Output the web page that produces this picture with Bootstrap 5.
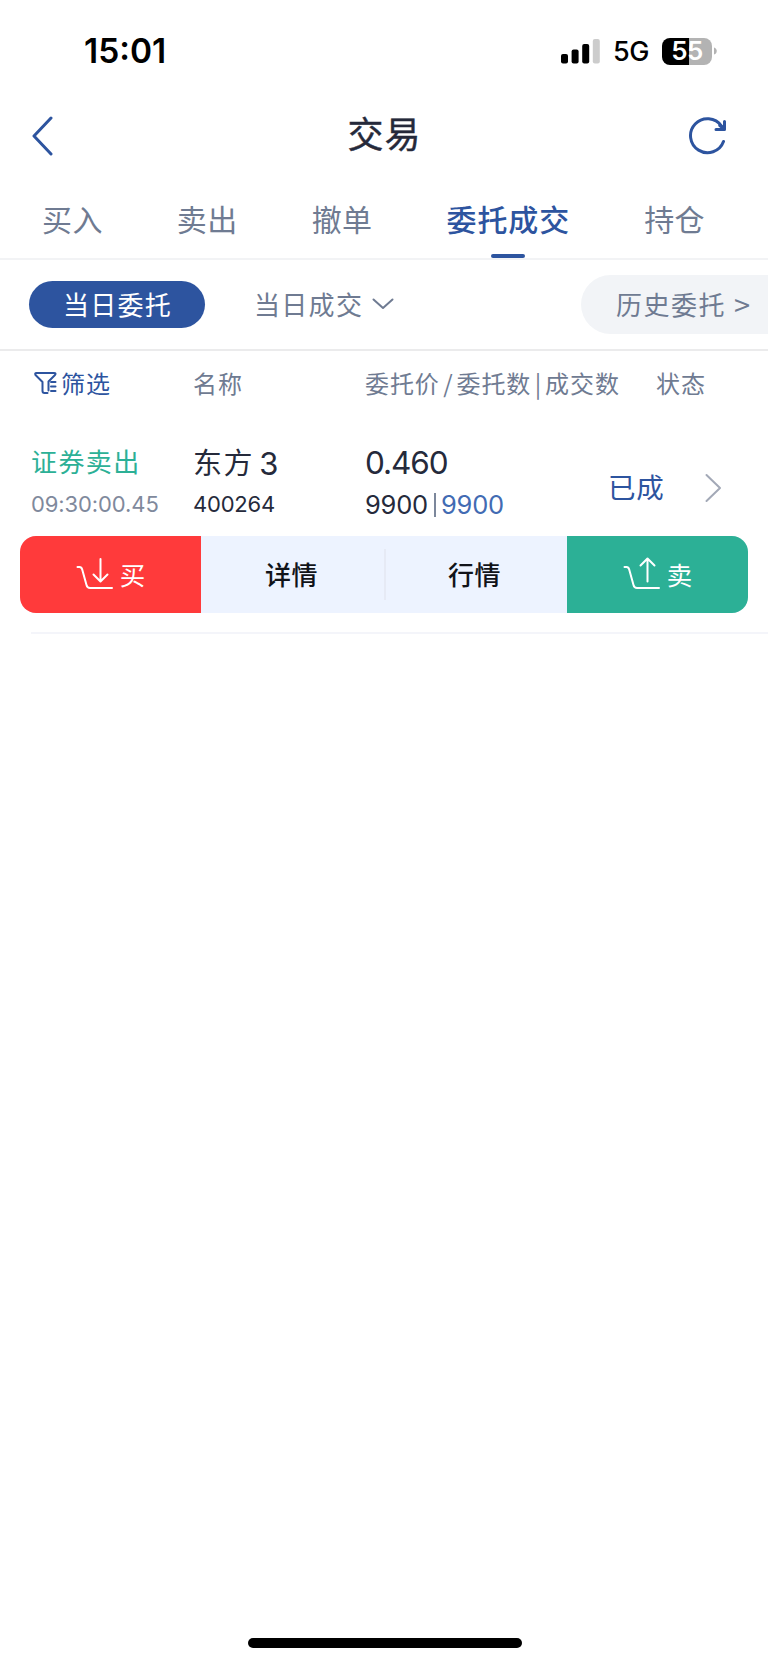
<!DOCTYPE html>
<html lang="zh-CN">
<head>
<meta charset="utf-8">
<meta name="viewport" content="width=device-width, initial-scale=1">
<title>交易</title>
<link href="https://cdn.jsdelivr.net/npm/bootstrap@5.3.0/dist/css/bootstrap.min.css" rel="stylesheet">
<style>
  :root { --brand: #2d549f; --muted: #6f7b92; --ink: #252a3b; --sell: #2cb096; --buy: #ff3a3b; }
  body { font-family: Inter, "Noto Sans CJK SC", sans-serif; color: var(--ink); background: #fff; line-height: 1; min-height: 1665px; overflow-x: hidden; }
  svg { display: block; flex: none; fill: none; stroke-linecap: round; stroke-linejoin: round; }
  .zh { font-family: "Noto Sans CJK SC", sans-serif; }
  .brand { color: var(--brand); }
  .soft { color: var(--muted); }
  .status-bar { height: 90px; padding: 12px 51px 0 84px; }
  .clock { font-size: 33.5px; font-weight: 600; letter-spacing: 0; padding-top: 2px; }
  .net { font-size: 27px; font-weight: 500; margin: 0 13px 0 13px; padding-top: 1px; letter-spacing: -.4px; }
  .battery { width: 50px; height: 27px; border-radius: 8px; background: linear-gradient(90deg, #000 55%, #b3b3b3 55%); color: #fff; font-size: 26px; font-weight: 600; letter-spacing: -.6px; }
  .title-bar { height: 91px; padding: 0 40px 0 31px; }
  .title-bar h1 { font-size: 36px; font-weight: 400; letter-spacing: 1px; color: #25293a; padding: 0 0 5px 28px; -webkit-text-stroke: .4px; }
  .tabs { height: 79px; border-bottom: 2px solid #f2f3f5; padding: 0 63px 0 42px; font-size: 30px; letter-spacing: .4px; }
  .tabs a { color: var(--muted); text-decoration: none; height: 77px; padding-bottom: 4px; }
  .tabs a.active { color: var(--brand); font-weight: 500; letter-spacing: .9px; }
  .tabs a.active::after { content: ""; position: absolute; left: 50%; bottom: 0; width: 34px; height: 4px; margin-left: -17px; border-radius: 2px; background: var(--brand); }
  .filters { height: 91px; border-bottom: 2px solid #ebebec; font-size: 26px; letter-spacing: 1.3px; padding-left: 29px; }
  .today { width: 176px; height: 47px; background: var(--brand); color: #fff; padding: 0 0 2px 1px; }
  .deals { margin-left: 49px; gap: 9px; padding-bottom: 2px; }
  .history { width: 187px; height: 59px; border-radius: 30px 0 0 30px; background: #f2f4f7; padding: 0 0 2px 35px; letter-spacing: 1.5px; }
  .more { font-size: 29px; margin-left: 8px; }
  .grid-row { display: grid; grid-template-columns: 162px 172px 1fr; padding-left: 31px; }
  .head-row { height: 65px; padding-bottom: 2px; font-size: 24px; letter-spacing: .9px; grid-template-columns: 162px 172px 291px 1fr; }
  .sep { padding: 0 3px 0 3.5px; }
  .order { height: 119px; padding-top: 27px; }
  .line-a { height: 40px; }
  .line-b { height: 42px; }
  .side { font-size: 26px; letter-spacing: 1.4px; color: var(--sell); }
  .time { font-size: 22px; letter-spacing: -.1px; color: #7f899c; }
  .stock { font-size: 29px; letter-spacing: 1.6px; }
  .stock-no { font-size: 31px; margin-left: 5px; }
  .code { font-size: 22px; letter-spacing: -.2px; }
  .price { font-size: 31.5px; letter-spacing: -1.1px; }
  .qty { font-size: 25.5px; letter-spacing: -.2px; padding-top: 1px; }
  .bar { width: 2px; height: 24px; background: #7c879b; margin: 0 5px 0 6px; }
  .done { color: #426bb3; }
  .state { font-size: 27.5px; letter-spacing: .8px; margin-left: 243px; padding-top: 12px; height: 79px; }
  .go { margin: 30px 46px 0 0; }
  .actions { height: 77px; margin: 1px 20px 0 20px; border-radius: 16px; overflow: hidden; background: #edf3ff; font-size: 26px; }
  .actions > div { padding-bottom: 2px; }
  .trade { width: 181px; gap: 6px; font-size: 25.5px; }
  .actions .plain { color: #111319; font-weight: 500; letter-spacing: .5px; padding-right: 2px; }
  .split { position: relative; }
  .split::after { content: ""; position: absolute; right: -2px; top: 13px; bottom: 13px; width: 2px; background: #e6eaf5; }
  .buy { background: var(--buy); }
  .sell { background: var(--sell); }
  .tail { height: 2px; margin: 19px 0 0 31px; background: #f4f5fa; }
  .home { width: 274px; height: 10px; background: #000; margin-left: 248px; margin-bottom: 17px; }
</style>
</head>
<body class="d-flex flex-column">
<header class="status-bar d-flex align-items-center justify-content-between text-black">
  <span class="clock">15:01</span>
  <div class="d-flex align-items-center">
    <svg width="39" height="26" viewBox="0 0 39 26"><g fill="#000"><rect x="0" y="16" width="7" height="9.5" rx="2"/><rect x="10.600" y="11.500" width="7" height="14" rx="2"/><rect x="21.200" y="6" width="7" height="19.500" rx="2"/></g><rect x="31.800" y="1" width="7" height="24.500" rx="2" fill="#ccc"/></svg>
    <span class="net">5G</span>
    <span class="battery d-flex align-items-center justify-content-center">55</span>
    <svg width="5" height="8" viewBox="0 0 5 8"><path d="M2 .5C5.700 1.500 5.700 6.500 2 7.500Z" fill="#b3b3b3"/></svg>
  </div>
</header>

<nav class="title-bar d-flex align-items-center justify-content-between zh">
  <svg width="22" height="40" viewBox="0 0 22 40" stroke="#2d549f" stroke-width="3"><path d="M20 2 3 20 20 38"/></svg>
  <h1 class="m-0">交易</h1>
  <svg width="40" height="40" viewBox="0 0 40 40" stroke="#2d549f" stroke-width="3"><path d="M35.500 25.500A17 17 0 1 1 33.500 10"/><path d="M36.500 5.500V13.500H28"/><path d="M32 9.500 35 12" stroke-width="3.500"/></svg>
</nav>

<div class="tabs d-flex justify-content-between zh">
  <a class="d-flex align-items-center">买入</a>
  <a class="d-flex align-items-center">卖出</a>
  <a class="d-flex align-items-center">撤单</a>
  <a class="d-flex align-items-center position-relative active">委托成交</a>
  <a class="d-flex align-items-center">持仓</a>
</div>

<div class="filters d-flex align-items-center zh soft">
  <span class="today rounded-pill d-flex align-items-center justify-content-center">当日委托</span>
  <span class="deals d-flex align-items-center">当日成交
    <svg width="22" height="14" viewBox="0 0 22 14" stroke="#6f7b92" stroke-width="2"><path d="M1.500 2.500 11 11 20.500 2.500"/></svg>
  </span>
  <span class="history d-flex align-items-center ms-auto text-nowrap">历史委托<span class="more">&gt;</span></span>
</div>

<main>
  <div class="grid-row head-row align-items-center zh soft text-nowrap">
    <span class="d-flex align-items-center brand">
      <svg width="26" height="24" viewBox="0 0 26 24" style="margin:0 2.500px 0 1.500px" stroke="#2d549f" stroke-width="2"><path d="M14.500 22H11.500Q9.500 22 9.500 20V11L2.500 4Q1.500 2 3.500 2H21Q23.500 2 22 4L15.500 10.500V19.500"/><path d="M18 11H22.500M18 15.500H22.500M18 20H22.500"/></svg>筛选</span>
    <span>名称</span>
    <span>委托价<span class="sep">/</span>委托数<span class="sep">|</span>成交数</span>
    <span>状态</span>
  </div>

  <section class="order grid-row text-nowrap">
    <div>
      <div class="line-a d-flex align-items-center side">证券卖出</div>
      <div class="line-b d-flex align-items-center time">09:30:00.45</div>
    </div>
    <div>
      <div class="line-a d-flex align-items-center stock">东方<span class="stock-no">3</span></div>
      <div class="line-b d-flex align-items-center code">400264</div>
    </div>
    <div class="d-flex">
      <div style="width:0">
        <div class="line-a d-flex align-items-center price">0.460</div>
        <div class="line-b d-flex align-items-center qty">9900<span class="bar flex-shrink-0"></span><span class="done">9900</span></div>
      </div>
      <div class="state d-flex align-items-center brand">已成</div>
      <svg class="go ms-auto" width="18" height="30" viewBox="0 0 18 30" stroke="#a3a9b7" stroke-width="2"><path d="M2.500 2 16 15 2.500 28"/></svg>
    </div>
  </section>

  <div class="actions d-flex zh">
    <div class="trade buy text-white d-flex align-items-center justify-content-center">
      <svg width="38" height="34" viewBox="0 0 38 34" stroke="#fff" stroke-width="2"><path d="M1.500 10H3.500Q5.500 10 6.200 12.500L10.500 28Q11.300 31 14 31H36"/><path d="M24.500 2V24M17.500 17.500 24.500 24.500 31.500 17.500"/></svg>买</div>
    <div class="plain split flex-fill d-flex align-items-center justify-content-center">详情</div>
    <div class="plain flex-fill d-flex align-items-center justify-content-center">行情</div>
    <div class="trade sell text-white d-flex align-items-center justify-content-center">
      <svg width="38" height="34" viewBox="0 0 38 34" stroke="#fff" stroke-width="2"><path d="M1.500 10H3.500Q5.500 10 6.200 12.500L10.500 28Q11.300 31 14 31H36"/><path d="M24.500 24.500V2M17.500 8.500 24.500 1.500 31.500 8.500"/></svg>卖</div>
  </div>
  <div class="tail"></div>
</main>

<div class="home rounded-pill mt-auto"></div>
<script src="https://cdn.jsdelivr.net/npm/bootstrap@5.3.0/dist/js/bootstrap.bundle.min.js"></script>
</body>
</html>
